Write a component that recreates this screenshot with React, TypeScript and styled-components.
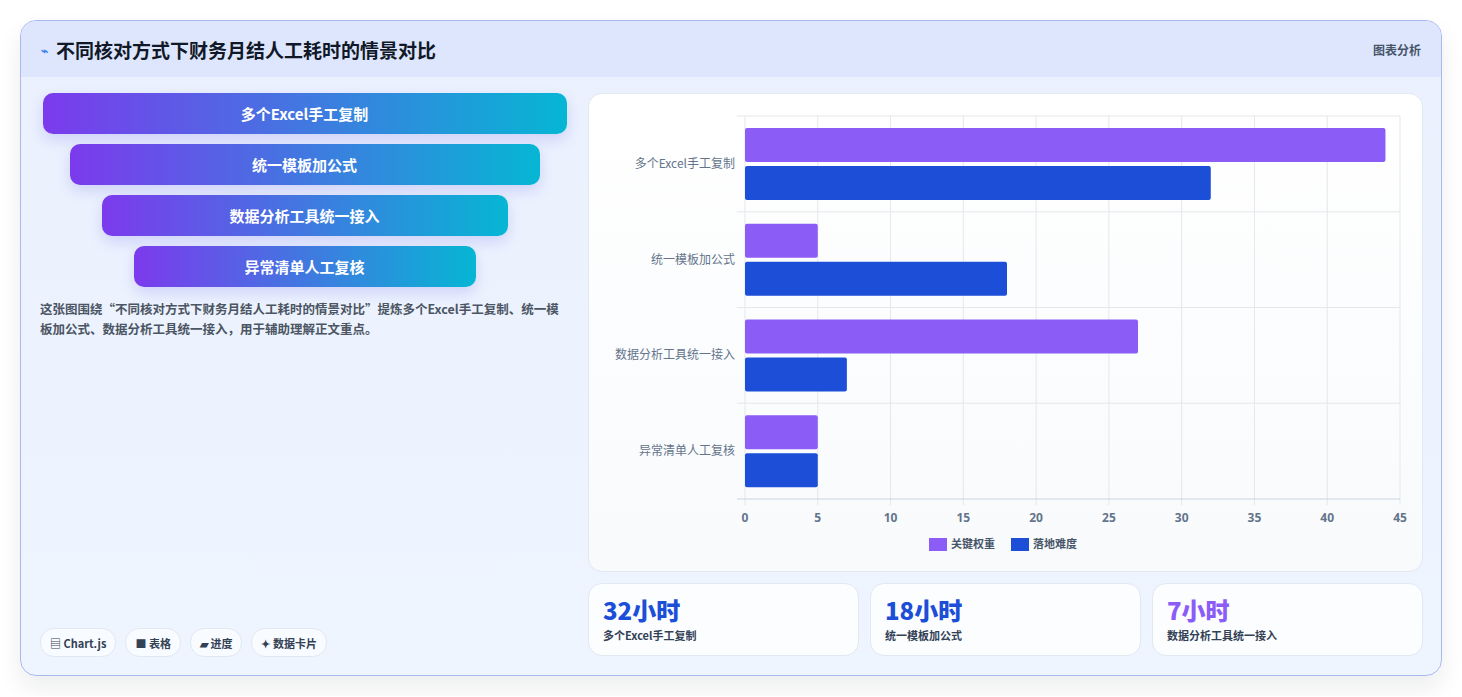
import React from "react";
import styled, { createGlobalStyle } from "styled-components";

const G = createGlobalStyle`
  html,body{margin:0;padding:0;background:#fff;}
  body{font-family:"Noto Sans CJK SC","Noto Sans",sans-serif;}
`;
const Page = styled.div`padding:20px 20px 20px 20px;width:1462px;box-sizing:border-box;`;
const Card = styled.div`
  width:1422px;height:656px;box-sizing:border-box;border:1px solid #a9b8ef;border-radius:16px;
  background:linear-gradient(180deg,#eaf0fd 0%,#eef5ff 100%);overflow:hidden;display:flex;flex-direction:column;
  box-shadow:0 12px 24px rgba(15,23,42,0.08);
`;
const Header = styled.div`
  height:56px;flex:none;background:#dde6fd;display:flex;align-items:center;justify-content:space-between;padding:0 20px 0 20px;
`;
const Title = styled.div`display:flex;align-items:center;gap:8px;font-size:19px;font-weight:700;color:#111827;`;
const Tag = styled.div`font-size:12px;font-weight:700;color:#475569;`;
const Body = styled.div`flex:1;display:grid;grid-template-columns:529px 835px;gap:19px;padding:16px 18px 18px 19px;`;
const Left = styled.div`display:flex;flex-direction:column;`;
const Funnel = styled.div`display:flex;flex-direction:column;align-items:center;gap:10px;`;
const Step = styled.div<{ w: number }>`
  width:${p => p.w}px;height:41px;border-radius:10px;background:linear-gradient(90deg,#7c3aed,#06b6d4);
  color:#fff;font-weight:700;font-size:15px;display:flex;align-items:center;justify-content:center;
  box-shadow:0 6px 14px rgba(79,70,229,0.18);
`;
const Desc = styled.p`margin:12px 0 0 0;font-size:12.5px;line-height:20px;font-weight:700;color:#4b5563;`;
const Badges = styled.div`margin-top:auto;display:flex;gap:9px;`;
const Badge = styled.div`
  height:27px;padding:0 9px;border-radius:14px;background:#f8fbff;border:1px solid #e2e8f0;
  display:flex;align-items:center;gap:4px;font-size:11px;font-weight:700;color:#334155;
`;
const Right = styled.div`display:flex;flex-direction:column;gap:11px;`;
const ChartBox = styled.div`height:479px;box-sizing:border-box;border:1px solid #e2e8f0;border-radius:14px;background:linear-gradient(180deg,#fff,#f8fafc);`;
const Stats = styled.div`display:grid;grid-template-columns:repeat(3,1fr);gap:11px;`;
const Stat = styled.div`height:73px;box-sizing:border-box;border:1px solid #e2e8f0;border-radius:14px;background:#fbfdff;padding:10px 14px;`;
const Num = styled.div<{ c: string }>`font-size:24px;font-weight:800;color:${p => p.c};line-height:32px;`;
const Lbl = styled.div`font-size:11px;font-weight:700;color:#334155;margin-top:1px;`;

const cats = ["多个Excel手工复制", "统一模板加公式", "数据分析工具统一接入", "异常清单人工复核"];
const a = [44, 5, 27, 5];
const b = [32, 18, 7, 5];

function Chart() {
  const x0 = 156, x1 = 811, top = 22, bot = 405;
  const sx = (v: number) => x0 + (v / 45) * (x1 - x0);
  const band = (bot - top) / 4;
  return (
    <svg width="834" height="477" style={{ display: "block" }}>
      {Array.from({ length: 10 }, (_, i) => (
        <g key={i}>
          <line x1={sx(i * 5)} x2={sx(i * 5)} y1={top} y2={bot + 6} stroke="#e5e7eb" />
          <text x={sx(i * 5)} y={428} fontSize="12" fill="#64748b" fontWeight="700" textAnchor="middle" fontFamily="Noto Sans">{i * 5}</text>
        </g>
      ))}
      {[0, 1, 2, 3, 4].map(i => (
        <line key={i} x1={x0 - 8} x2={x1} y1={top + band * i} y2={top + band * i} stroke={i === 4 ? "#cbd5e1" : "#e5e7eb"} />
      ))}
      {cats.map((c, i) => {
        const y = top + band * i;
        return (
          <g key={c}>
            <text x={x0 - 10} y={y + band / 2 + 4} fontSize="12" fill="#64748b" textAnchor="end">{c}</text>
            <rect x={x0} y={y + 12} width={sx(a[i]) - x0} height={34} rx="2" fill="#8b5cf6" />
            <rect x={x0} y={y + 50} width={sx(b[i]) - x0} height={34} rx="2" fill="#1d4ed8" />
          </g>
        );
      })}
      <rect x={340} y={444} width={18} height={13} fill="#8b5cf6" />
      <text x={362} y={454} fontSize="11" fill="#475569" fontWeight="700">关键权重</text>
      <rect x={422} y={444} width={18} height={13} fill="#1d4ed8" />
      <text x={444} y={454} fontSize="11" fill="#475569" fontWeight="700">落地难度</text>
    </svg>
  );
}

export default function App() {
  return (
    <Page>
      <G />
      <Card>
        <Header>
          <Title><span style={{ color: "#3b82f6", fontSize: 12 }}>⌁</span>不同核对方式下财务月结人工耗时的情景对比</Title>
          <Tag>图表分析</Tag>
        </Header>
        <Body>
          <Left>
            <Funnel>
              <Step w={524}>多个Excel手工复制</Step>
              <Step w={470}>统一模板加公式</Step>
              <Step w={406}>数据分析工具统一接入</Step>
              <Step w={342}>异常清单人工复核</Step>
            </Funnel>
            <Desc>这张图围绕“不同核对方式下财务月结人工耗时的情景对比”提炼多个Excel手工复制、统一模板加公式、数据分析工具统一接入，用于辅助理解正文重点。</Desc>
            <Badges>
              <Badge>▤ Chart.js</Badge>
              <Badge>■ 表格</Badge>
              <Badge>▰ 进度</Badge>
              <Badge>✦ 数据卡片</Badge>
            </Badges>
          </Left>
          <Right>
            <ChartBox><Chart /></ChartBox>
            <Stats>
              <Stat><Num c="#1d4ed8">32小时</Num><Lbl>多个Excel手工复制</Lbl></Stat>
              <Stat><Num c="#1d4ed8">18小时</Num><Lbl>统一模板加公式</Lbl></Stat>
              <Stat><Num c="#8b5cf6">7小时</Num><Lbl>数据分析工具统一接入</Lbl></Stat>
            </Stats>
          </Right>
        </Body>
      </Card>
    </Page>
  );
}
